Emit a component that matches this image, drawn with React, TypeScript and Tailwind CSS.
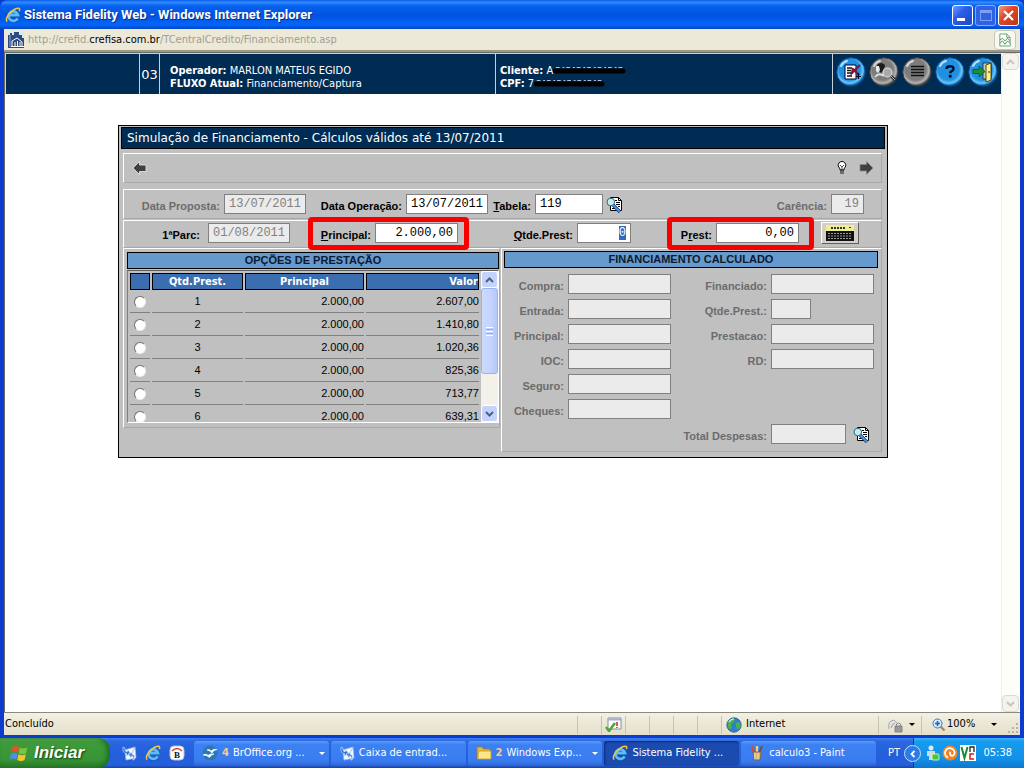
import React from "react";

const TAHOMA = "font-['DejaVu_Sans_Condensed','Noto_Sans',sans-serif]";

type IconProps = { className?: string };

function IeIcon({ className = "h-4 w-4" }: IconProps) {
  return (
    <svg viewBox="0 0 16 16" className={className} aria-hidden="true">
      <path d="M12.600 11.300A4.800 4.800 0 1 1 13 8H5" fill="none" stroke="#0d4fa8" strokeWidth="4" />
      <path d="M12.600 11.300A4.800 4.800 0 1 1 13 8H5" fill="none" stroke="#5cbcf8" strokeWidth="2.800" />
      <path d="M2.200 14.600C-1 11.500 7 2 13 1.200c2-.2 2 1.600 1.200 3" fill="none" stroke="#f4c542" strokeWidth="1.500" />
    </svg>
  );
}

function SiteIcon({ className = "h-4 w-4" }: IconProps) {
  return (
    <svg viewBox="0 0 16 16" className={className} aria-hidden="true">
      <path d="M0 0h16v16H0z" fill="#dfe6f0" />
      <path d="M0 16V3h2V1h2v2h2V0h5v3h3v3h2v10z" fill="#2b4a80" />
      <path d="M2 3v12" stroke="#8fa6cc" strokeWidth="1" />
      <path d="M4 14V9l5-3 5 4v4M7 14v-4M9.500 14V9M12 14v-4M3 14.500h13" fill="none" stroke="#fff" strokeWidth="1" />
    </svg>
  );
}

function BrokenPageIcon() {
  return (
    <svg viewBox="0 0 14 16" className="h-3.5 w-3" aria-hidden="true">
      <path d="M1 1h8l4 4v10H1z" fill="#fff" stroke="#5b9a62" />
      <path d="M9 1v4h4" fill="none" stroke="#5b9a62" />
      <path d="M1 8l3-2 3 3 3-3 3 3M1 12l3-3 3 4 3-4 3 3" fill="none" stroke="#3b8746" />
    </svg>
  );
}

type OrbProps = { id: string; tone: "blue" | "gray"; label: string; children: React.ReactNode };

function Orb({ id, tone, label, children }: OrbProps) {
  const [light, mid, dark] = tone === "blue" ? ["#6cc6fa", "#2090e0", "#064f94"] : ["#b4b4b4", "#7c7c7c", "#3c3c3c"];
  return (
    <button type="button" aria-label={label} className="h-[30px] w-[30px]">
      <svg viewBox="0 0 30 30" className="h-[30px] w-[30px]">
        <defs>
          <radialGradient id={id} cx="0.45" cy="0.42" r="0.56">
            <stop offset="0" stopColor={mid} />
            <stop offset="0.65" stopColor={mid} />
            <stop offset="0.85" stopColor={light} />
            <stop offset="1" stopColor={dark} />
          </radialGradient>
        </defs>
        <circle cx="15" cy="15" r="14.200" fill={`url(#${id})`} stroke={dark} />
        <path d="M5 9q2-4 6-5" fill="none" stroke="#fff" strokeOpacity=".7" strokeWidth="2" strokeLinecap="round" />
        {children}
      </svg>
    </button>
  );
}

function ToolbarOrbs() {
  return (
    <div className="flex gap-[3px]">
      <Orb id="orb-proposal" tone="blue" label="Proposta">
        <path d="M9 8h11v14H9z" fill="#fff" stroke="#003" strokeWidth="1" />
        <path d="M11 11h5M11 13.500h4M11 16h6M11 19h5" stroke="#111" strokeWidth="1.300" />
        <path d="M24 8l-8 8 1-5M17 12l6 6" stroke="#8a1230" strokeWidth="2.200" fill="none" />
        <path d="M22.500 16v6M20 19.500h5" stroke="#112" strokeWidth="1.200" />
      </Orb>
      <Orb id="orb-customer" tone="gray" label="Pesquisar cliente">
        <path d="M8 8q4-4 8 0l-1 5-3 3-3-3z" fill="#1c1c1c" />
        <path d="M7 9h3l1 4-2 3-2-2z" fill="#e8e8e8" />
        <path d="M6 20q4-5 9-1" stroke="#ddd" strokeWidth="2" fill="none" />
        <circle cx="18.500" cy="15.500" r="4.500" fill="#a9a9a9" stroke="#e0e0e0" strokeWidth="1.200" />
        <path d="M22 19l4 4" stroke="#222" strokeWidth="2.500" />
        <path d="M22 19l4 4" stroke="#bbb" strokeWidth="1" />
      </Orb>
      <Orb id="orb-list" tone="gray" label="Lista">
        <path d="M9 9.500h13M9 12.500h13M9 15.500h13M9 18.500h13" stroke="#111" strokeWidth="1.300" />
      </Orb>
      <Orb id="orb-help" tone="blue" label="Ajuda">
        <path d="M11.500 12q0-2.800 3.500-2.800t3.500 2.600q0 1.500-1.800 2.300-1.500.7-1.500 2.200" fill="none" stroke="#06122a" strokeWidth="2.500" />
        <path d="M13.800 17.800h2.800v2.800h-2.800z" fill="#06122a" />
      </Orb>
      <Orb id="orb-exit" tone="blue" label="Sair">
        <path d="M15 6h8v16h-8z" fill="#c9c6a8" stroke="#222" strokeWidth=".8" />
        <path d="M18 8l5-2v17l-5 2z" fill="#fff37a" stroke="#222" strokeWidth=".8" />
        <path d="M21 14v2" stroke="#222" />
        <path d="M5 12.500h6V9l6 5.500-6 5.500v-3.500H5z" fill="#1f8f2f" stroke="#053" strokeWidth=".8" />
      </Orb>
    </div>
  );
}

function ArrowIcon({ flip = false }: { flip?: boolean }) {
  return (
    <svg viewBox="0 0 15 14" className={flip ? "h-3.5 w-[15px] rotate-180" : "h-3.5 w-[15px]"} aria-hidden="true">
      <path d="M1 7l6.500-6.500V4H14v6.500H7.500V13.500z" fill="#404040" stroke={flip ? "#8a8a8a" : "#eee"} strokeWidth=".8" />
    </svg>
  );
}

function BulbIcon() {
  return (
    <svg viewBox="0 0 10 14" className="h-3.5 w-2.5" aria-hidden="true">
      <path d="M3 9V7.500A3.800 3.800 0 1 1 7 7.500V9z" fill="#fff" stroke="#000" />
      <path d="M3 4l2 2 2-2M5 6v3" fill="none" stroke="#000" strokeWidth=".7" />
      <path d="M3 9.500h4v3H3z" fill="#222" />
      <path d="M3 11h4" stroke="#ddd" strokeWidth=".8" />
    </svg>
  );
}

function SearchDocIcon() {
  return (
    <svg viewBox="0 0 17 17" className="h-[17px] w-[17px]" aria-hidden="true">
      <path d="M4.500 1.500h8l3 3v10h-11z" fill="#fff" stroke="#000" />
      <path d="M12.500 1.500v3h3" fill="none" stroke="#000" />
      <path d="M9 4.500h2M10 6.500h4M10 8.500h4M12 10.500h2M6 12.500h3" stroke="#000" />
      <circle cx="4.800" cy="6" r="3.800" fill="#c4ecec" stroke="#2b6d78" />
      <path d="M7 9l7 7" stroke="#0b2f70" strokeWidth="3.200" />
      <path d="M7 9l7 7" stroke="#4f97e8" strokeWidth="1.800" />
    </svg>
  );
}

function CalculatorIcon() {
  return (
    <svg viewBox="0 0 28 16" className="h-4 w-7" aria-hidden="true">
      <path d="M0 0h28v16H0z" fill="#111" />
      <path d="M0 0h28v6H0z" fill="#f1ee8c" />
      <path d="M5 3h14" stroke="#333" strokeWidth="2" strokeDasharray="2 1" />
      <path d="M23 2.500h2" stroke="#333" />
      <path d="M2 8.500h24M2 11h24M2 13.500h24" stroke="#999" strokeWidth="1" strokeDasharray="2 1" />
    </svg>
  );
}

function Chevron({ up = false, color }: { up?: boolean; color: string }) {
  return (
    <svg viewBox="0 0 9 6" className="h-1.5 w-[9px]" aria-hidden="true">
      <path d={up ? "M1 5l3.500-3.500L8 5" : "M1 1l3.500 3.500L8 1"} fill="none" stroke={color} strokeWidth="2" />
    </svg>
  );
}

function OutlookIcon() {
  return (
    <svg viewBox="0 0 16 16" className="h-4 w-4 shrink-0" aria-hidden="true">
      <path d="M4 5l10-3 1 11-10 2z" fill="#f6faff" stroke="#9fc0ea" strokeWidth=".7" />
      <path d="M4 5l6 5 4-8" fill="none" stroke="#8fb3e0" strokeWidth=".8" />
      <path d="M2 2q-1 6 4 7l-1 2 5-2-3-4-1 2Q3 6 4 3z" fill="#2f74cc" stroke="#d6e8ff" strokeWidth=".6" />
      <path d="M13 15q2-5-2-6l1-2-5 2 3 4 1-2q2 1 1 4z" fill="#4a90e0" stroke="#e6f2ff" strokeWidth=".6" />
    </svg>
  );
}

function BrOfficeIcon() {
  return (
    <svg viewBox="0 0 16 16" className="h-4 w-4 shrink-0" aria-hidden="true">
      <circle cx="8" cy="8" r="7.500" fill="#2c78b4" />
      <path d="M5 5q2.500-1.500 4 1 2-2.500 6-1.500-3.500.5-5 3.500Q8 5.500 5 5zM1 10q3-2 5 .5Q8.500 8 12 9q-3 .5-4.500 3.500Q5 10 1 10z" fill="#fff" stroke="#fff" strokeWidth=".6" />
    </svg>
  );
}

function BIcon() {
  return (
    <svg viewBox="0 0 16 16" className="h-4 w-4" aria-hidden="true">
      <rect x="1" y="1" width="14" height="14" rx="4" fill="#fff" stroke="#b8c4d8" />
      <path d="M3 6q5-5 10 0" fill="none" stroke="#d0402c" strokeWidth="1.300" />
      <text x="8" y="13" textAnchor="middle" fontSize="9" fontWeight="bold" fontFamily="Liberation Serif" fill="#111">
        B
      </text>
    </svg>
  );
}

function FolderIcon() {
  return (
    <svg viewBox="0 0 16 16" className="h-4 w-4 shrink-0" aria-hidden="true">
      <path d="M1 14V2h5l1.500 2H14v10z" fill="#e9b93a" stroke="#a87814" strokeWidth=".8" />
      <path d="M2.500 6H15v8H2z" fill="#fce58a" stroke="#c69a2c" strokeWidth=".8" />
    </svg>
  );
}

function PaintIcon() {
  return (
    <svg viewBox="0 0 16 16" className="h-4 w-4 shrink-0" aria-hidden="true">
      <path d="M5 8L3 1" stroke="#d84a2c" strokeWidth="2.200" />
      <path d="M8 8V1" stroke="#f1d27a" strokeWidth="2.200" />
      <path d="M10 8l3-7" stroke="#7a4a20" strokeWidth="1.800" />
      <path d="M4 7h8l-1 8H5z" fill="#d4b27a" stroke="#7a5a34" strokeWidth=".8" />
      <path d="M6 8v6M9 8v6" stroke="#efe0c0" strokeWidth="1" />
    </svg>
  );
}

function GlobeIcon() {
  return (
    <svg viewBox="0 0 16 16" className="h-4 w-4" aria-hidden="true">
      <circle cx="8" cy="8" r="7.200" fill="#2e7fd0" stroke="#1c5694" strokeWidth=".8" />
      <path d="M3 3q4-3 6-1L8 5 5 7l1 3-2 3Q0 9 3 3zM10 6l4-1q2 5-2 8l-2-3z" fill="#4fb04a" />
      <path d="M3 5q2-3 5-3" stroke="#cfe8ff" strokeWidth="1.200" fill="none" />
    </svg>
  );
}

function WindowsFlag() {
  return (
    <svg viewBox="0 0 18 18" className="h-[18px] w-[18px]" aria-hidden="true">
      <path d="M2.500 3.500Q5.500 1 9 3L7.800 8.500Q4.500 6.500 1.300 9z" fill="#e8512c" />
      <path d="M9.800 3.500q3.500 2 7.500 0L16 9.300q-3.500 2-7.300 0z" fill="#7fc241" />
      <path d="M1 10q3-2.200 6.500-.2l-1.200 5.500Q3 13.500-.2 15.500z" fill="#4a8ff0" />
      <path d="M8.500 10.200q3.500 2 7.300 0l-1.300 5.800q-3.500 2-7.200 0z" fill="#fbc42e" />
    </svg>
  );
}

function TitleBar() {
  return (
    <header className="flex h-[29px] items-center gap-[3px] rounded-t-lg bg-[linear-gradient(#0a5ce8,#2f8bff_8%,#0761ee_20%,#0053e1_55%,#0566fb_85%,#0148c4)] pt-px pr-[5px] pl-[5px]">
      <IeIcon className="h-4 w-4" />
      <h1 className="font-['Roboto','Noto_Sans',sans-serif] text-[13px] font-bold text-white [text-shadow:1px_1px_#0a2a80]">
        Sistema Fidelity Web - Windows Internet Explorer
      </h1>
      <div className="ml-auto flex gap-0.5">
        <button
          type="button"
          aria-label="Minimizar"
          className="flex h-[21px] w-[21px] items-end rounded-[3px] border border-white bg-[linear-gradient(135deg,#6f9bff,#2a5de8_40%,#1c48c8)] p-1"
        >
          <span className="h-[3px] w-2 bg-white" />
        </button>
        <button
          type="button"
          aria-label="Maximizar"
          disabled
          className="flex h-[21px] w-[21px] items-center justify-center rounded-[3px] border border-[#8aa9f5] bg-[#2f62e4]"
        >
          <span className="h-[11px] w-3 border border-t-[3px] border-[#7f9ff2]" />
        </button>
        <button
          type="button"
          aria-label="Fechar"
          className="flex h-[21px] w-[21px] items-center justify-center rounded-[3px] border border-white bg-[linear-gradient(135deg,#f0a088,#e0482a_40%,#c23412)]"
        >
          <svg viewBox="0 0 11 11" className="h-[11px] w-[11px]">
            <path d="M1 1l9 9M10 1l-9 9" stroke="#fff" strokeWidth="2.200" />
          </svg>
        </button>
      </div>
    </header>
  );
}

function AddressBar() {
  return (
    <div className="flex h-[23px] items-center border-b-2 border-[#9a998c] bg-[#ece9d8] pl-1">
      <SiteIcon />
      <span className={`ml-1 pt-0.5 text-[11px] text-[#a09e92] ${TAHOMA}`}>
        http://crefid.<span className="text-black">crefisa.com.br</span>/TCentralCredito/Financiamento.asp
      </span>
      <button
        type="button"
        aria-label="Exibir modo de compatibilidade"
        className="mr-1 ml-auto flex h-5 w-[22px] items-center justify-center rounded-sm border border-[#c9c7ba] bg-[#f8f7f2]"
      >
        <BrokenPageIcon />
      </button>
    </div>
  );
}

function Redaction({ first, className }: { first: string; className: string }) {
  return (
    <span className="inline-flex items-center">
      {first}
      <svg viewBox="0 0 78 9" preserveAspectRatio="none" className={className} aria-hidden="true">
        <path d="M3 1.500h71" stroke="#b9c6d6" strokeWidth="1" strokeDasharray="4 3 2 2" />
        <path d="M2 5h72" fill="none" stroke="#000" strokeWidth="5" strokeLinecap="round" />
      </svg>
    </span>
  );
}

function AppHeader() {
  return (
    <div className={`flex h-[41px] border-t border-l border-[#c8d0d8] bg-[#002c54] text-[11px] leading-[13px] text-white ${TAHOMA}`}>
      <div className="w-[133px]" />
      <div className="flex w-5 items-center justify-center border-l border-[#c8d0d8] font-['DejaVu_Sans',sans-serif] text-[13px]">
        03
      </div>
      <div className="w-[336px] border-l border-[#c8d0d8] pt-2.5 pl-2.5">
        <p>
          <b>Operador:</b> MARLON MATEUS EGIDO
        </p>
        <p>
          <b>FLUXO Atual:</b> Financiamento/Captura
        </p>
      </div>
      <div className="flex-1 border-l border-[#c8d0d8] pt-2.5 pl-1">
        <p>
          <b>Cliente:</b> <Redaction first="A" className="h-[9px] w-[74px]" />
        </p>
        <p>
          <b>CPF:</b> <Redaction first="7" className="h-[9px] w-[72px]" />
        </p>
      </div>
      <div className="border-l border-[#c8d0d8] pt-[3px] pr-[3px] pl-[3px]">
        <ToolbarOrbs />
      </div>
    </div>
  );
}

type FieldProps = {
  id: string;
  label: React.ReactNode;
  value?: string;
  disabled?: boolean;
  readOnly?: boolean;
  labelClass: string;
  inputClass: string;
  selected?: boolean;
};

function Field({ id, label, value = "", disabled = false, readOnly = false, labelClass, inputClass, selected = false }: FieldProps) {
  const dimmed = disabled || readOnly;
  return (
    <>
      <label
        htmlFor={id}
        className={`h-5 shrink-0 pt-1 text-right leading-4 font-bold whitespace-nowrap ${disabled ? "text-[#6c6c6c]" : "text-black"} ${labelClass}`}
      >
        {label}
      </label>
      <input
        id={id}
        type="text"
        defaultValue={value}
        disabled={disabled}
        readOnly={readOnly}
        autoFocus={selected}
        onFocus={selected ? (e) => e.target.select() : undefined}
        className={`h-5 shrink-0 border border-[#808080] px-1 font-['Liberation_Mono',monospace] text-[12px] caret-transparent outline-none selection:bg-[#316ac5] selection:text-white ${
          dimmed ? "bg-[#ebebeb] text-[#808080]" : "bg-white text-black"
        } ${inputClass}`}
      />
    </>
  );
}

// groups a field with a thick red marker drawn over the form row
function Highlighted({ className, children }: { className: string; children: React.ReactNode }) {
  return (
    <div className={`relative flex items-center ${className}`}>
      {children}
      <span className="pointer-events-none absolute inset-x-0 -top-1.5 -bottom-[7px] rounded-sm border-[5px] border-[#f80000]" />
    </div>
  );
}

const GROOVE = "border border-t-white border-l-white border-r-[#a8a8a8] border-b-[#a8a8a8]";

const installments = [
  { qty: 1, principal: "2.000,00", value: "2.607,00" },
  { qty: 2, principal: "2.000,00", value: "1.410,80" },
  { qty: 3, principal: "2.000,00", value: "1.020,36" },
  { qty: 4, principal: "2.000,00", value: "825,36" },
  { qty: 5, principal: "2.000,00", value: "713,77" },
  { qty: 6, principal: "2.000,00", value: "639,31" },
];

function ListScrollbar() {
  return (
    <div className="flex w-[17px] shrink-0 flex-col bg-[#f3f1ea]">
      <button type="button" aria-label="Rolar para cima" className="flex h-[17px] items-center justify-center rounded-[3px] border border-white bg-[#c3d3fd]">
        <Chevron up color="#4d6185" />
      </button>
      <div className="flex h-[86px] flex-col items-center justify-center gap-px rounded-[3px] border border-[#98b4f0] bg-[linear-gradient(90deg,#cbdafe,#c3d3fd_60%,#b4c8f8)]">
        <span className="h-px w-[7px] bg-white" />
        <span className="h-px w-[7px] bg-[#8cb0f8]" />
        <span className="h-px w-[7px] bg-white" />
        <span className="h-px w-[7px] bg-[#8cb0f8]" />
        <span className="h-px w-[7px] bg-white" />
      </div>
      <button type="button" aria-label="Rolar para baixo" className="mt-auto flex h-[17px] items-center justify-center rounded-[3px] border border-white bg-[#c3d3fd]">
        <Chevron color="#4d6185" />
      </button>
    </div>
  );
}

function SectionTitle({ children }: { children: React.ReactNode }) {
  return (
    <h3 className="h-[17px] border border-black bg-[#6699cc] text-center text-[11px] leading-[15px] font-bold text-[#0c1a30]">
      {children}
    </h3>
  );
}

function InstallmentOptions() {
  const th = "h-[17px] border border-black bg-[#3a6eb0] p-0 leading-[15px]";
  const td = "h-[21px] border-b border-[#808080] p-0 pb-px";
  return (
    <section className={`${GROOVE} w-[377px] shrink-0 self-start pt-[3px] pb-1 pl-[3px]`}>
      <SectionTitle>OPÇÕES DE PRESTAÇÃO</SectionTitle>
      <div className="mt-px flex h-[153px] overflow-hidden border border-t-[#606060] border-r-white border-b-white border-l-[#808080]">
        <div className="h-full flex-1 overflow-hidden">
          <table className="w-full table-fixed border-separate border-spacing-[2px] text-[11px]">
            <thead className={`text-white ${TAHOMA}`}>
              <tr>
                <th className={`${th} w-5`} aria-label="Selecionar" />
                <th className={`${th} w-[91px]`}>Qtd.Prest.</th>
                <th className={`${th} w-[119px]`}>Principal</th>
                <th className={`${th} text-right`}>Valor</th>
              </tr>
            </thead>
            <tbody>
              {installments.map((row) => (
                <tr key={row.qty}>
                  <td className={td}>
                    <input
                      type="radio"
                      name="prestacao"
                      aria-label={`${row.qty} prestações`}
                      className="mx-auto block h-3 w-3 appearance-none rounded-full border border-t-[#707070] border-r-[#eee] border-b-[#eee] border-l-[#707070] bg-white"
                    />
                  </td>
                  <td className={`${td} text-center`}>{row.qty}</td>
                  <td className={`${td} text-right`}>{row.principal}</td>
                  <td className={`${td} text-right`}>{row.value}</td>
                </tr>
              ))}
            </tbody>
          </table>
        </div>
        <ListScrollbar />
      </div>
    </section>
  );
}

function CalculatedFinancing() {
  return (
    <section className={`${GROOVE} flex-1 pt-[2px] pb-[7px]`}>
      <div className="pr-[3px] pl-[2px]">
        <SectionTitle>FINANCIAMENTO CALCULADO</SectionTitle>
      </div>
      <div className="mt-1.5 grid grid-cols-[62px_103px_92px_103px] gap-x-1 gap-y-[5px]">
        <Field id="compra" label="Compra:" disabled labelClass="" inputClass="w-full" />
        <Field id="financiado" label="Financiado:" disabled labelClass="" inputClass="w-full" />
        <Field id="entrada" label="Entrada:" disabled labelClass="" inputClass="w-full" />
        <Field id="qtde-calc" label="Qtde.Prest.:" disabled labelClass="" inputClass="w-10" />
        <Field id="principal-calc" label="Principal:" disabled labelClass="" inputClass="w-full" />
        <Field id="prestacao-calc" label="Prestacao:" disabled labelClass="" inputClass="w-full" />
        <Field id="ioc" label="IOC:" disabled labelClass="" inputClass="w-full" />
        <Field id="rd" label="RD:" disabled labelClass="" inputClass="w-full" />
        <Field id="seguro" label="Seguro:" disabled labelClass="col-start-1" inputClass="w-full" />
        <Field id="cheques" label="Cheques:" disabled labelClass="col-start-1" inputClass="w-full" />
        <label htmlFor="total" className="col-span-3 h-5 pt-1 text-right leading-4 font-bold text-[#6c6c6c]">
          Total Despesas:
        </label>
        <div className="flex h-5 items-center justify-between">
          <input id="total" type="text" disabled className="h-5 w-[75px] border border-[#808080] bg-[#ebebeb]" />
          <button type="button" aria-label="Detalhar despesas" className="mr-1">
            <SearchDocIcon />
          </button>
        </div>
      </div>
    </section>
  );
}

function SimulationPanel() {
  return (
    <main className="mx-auto mt-[31px] w-[770px] border border-black bg-[#c0c0c0] px-[2px] pt-px pb-[5px] font-['Liberation_Sans',Arial,sans-serif] text-[11px]">
      <h2 className="h-[22px] border border-black bg-[#002c54] pl-[5px] font-['DejaVu_Sans',sans-serif] text-[12px] leading-5 text-white">
        Simulação de Financiamento - Cálculos válidos até 13/07/2011
      </h2>
      <div className="mr-[3px] ml-[2px]">
        <div className={`${GROOVE} mt-1 flex h-[30px] items-center pr-[7px] pl-2`}>
          <button type="button" aria-label="Voltar">
            <ArrowIcon />
          </button>
          <button type="button" aria-label="Dica" className="mr-3 ml-auto">
            <BulbIcon />
          </button>
          <button type="button" aria-label="Avançar">
            <ArrowIcon flip />
          </button>
        </div>

        <div className={`${GROOVE} mt-1.5 flex items-center py-1 pr-[17px]`}>
          <Field id="data-proposta" label="Data Proposta:" value="13/07/2011" disabled labelClass="mr-1 w-24" inputClass="w-[82px]" />
          <Field id="data-operacao" label="Data Operação:" value="13/07/2011" labelClass="mr-1 w-24" inputClass="w-[82px]" />
          <Field
            id="tabela"
            label={
              <>
                <u>T</u>abela:
              </>
            }
            value="119"
            labelClass="mr-1 w-[43px]"
            inputClass="w-[68px]"
          />
          <button type="button" aria-label="Pesquisar tabela" className="mr-auto ml-[3px]">
            <SearchDocIcon />
          </button>
          <Field id="carencia" label="Carência:" value="19" disabled labelClass="mr-1" inputClass="w-[33px] text-right" />
        </div>

        <div className={`${GROOVE} mt-px flex items-center pt-[2px] pb-1`}>
          <Field id="parcela" label="1ªParc:" value="01/08/2011" readOnly labelClass="mr-2 w-[76px]" inputClass="w-[82px]" />
          <Highlighted className="ml-[18px] w-[161px]">
            <Field
              id="principal"
              label={
                <>
                  <u>P</u>rincipal:
                </>
              }
              value="2.000,00"
              labelClass="mr-1 w-[63px]"
              inputClass="w-[83px] text-right"
            />
          </Highlighted>
          <Field
            id="qtde-prest"
            label={
              <>
                <u>Q</u>tde.Prest:
              </>
            }
            value="0"
            selected
            labelClass="mr-1 w-[104px]"
            inputClass="w-[54px] text-right"
          />
          <Highlighted className="ml-9 w-[147px]">
            <Field
              id="prest"
              label={
                <>
                  P<u>r</u>est:
                </>
              }
              value="0,00"
              labelClass="mr-1 w-[45px]"
              inputClass="w-[83px] text-right"
            />
          </Highlighted>
          <button
            type="button"
            aria-label="Calcular"
            className="-my-px ml-[7px] flex h-[22px] w-[38px] items-center justify-center border border-t-white border-r-[#606060] border-b-[#606060] border-l-white bg-[#d4d0c8]"
          >
            <CalculatorIcon />
          </button>
        </div>

        <div className="flex gap-px">
          <InstallmentOptions />
          <CalculatedFinancing />
        </div>
      </div>
    </main>
  );
}

function PageScrollbar() {
  const btn = "flex h-[17px] items-center justify-center rounded-sm border border-[#dcdad0] bg-[#f4f3ee]";
  return (
    <div className="flex w-[19px] shrink-0 flex-col justify-between border-l border-[#f0efe6] bg-[#fdfdfa] pr-px">
      <button type="button" aria-label="Subir página" disabled className={btn}>
        <Chevron up color="#c9c7ba" />
      </button>
      <button type="button" aria-label="Descer página" disabled className={btn}>
        <Chevron color="#c9c7ba" />
      </button>
    </div>
  );
}

function StatusBar() {
  const cell = "h-[18px] border-l border-[#c5c2b2]";
  return (
    <footer className={`flex h-[23px] items-center border-t border-[#8a897c] bg-[linear-gradient(#f3f1e6,#ece9d8_40%,#e4e0cc)] pt-px text-[11px] text-black ${TAHOMA}`}>
      <span className="flex-1 pl-px">Concluído</span>
      <span className={`${cell} w-6`} />
      <span className={`${cell} flex w-6 items-center justify-center`}>
        <svg viewBox="0 0 17 15" className="h-[15px] w-[17px]" aria-hidden="true">
          <path d="M3 1h13v11H3z" fill="#fff" stroke="#8d8d8d" />
          <path d="M3 2.500h13" stroke="#9bb3d6" strokeWidth="2" />
          <path d="M12 5v4M12 10v1" stroke="#d83020" strokeWidth="1.600" />
          <path d="M1 10l3 4 6-8" fill="none" stroke="#53a43c" strokeWidth="2.600" />
        </svg>
      </span>
      <span className={`${cell} w-6`} />
      <span className={`${cell} w-6`} />
      <span className={`${cell} w-6`} />
      <span className={`${cell} w-6`} />
      <span className={`${cell} flex w-[157px] items-center gap-1 pl-1`}>
        <GlobeIcon />
        Internet
      </span>
      <button type="button" aria-label="Modo protegido" className={`${cell} flex w-[43px] items-center gap-1.5 pl-2`}>
        <svg viewBox="0 0 16 16" className="h-4 w-4" aria-hidden="true">
          <path d="M2 12q-2-8 5-9l3 3" fill="#e2e2e2" stroke="#a8a8a8" />
          <path d="M4 11q1-4 4-5" stroke="#999" fill="none" />
          <path d="M8 9h7v6H8z" fill="#9a9a9a" stroke="#777" strokeWidth=".8" />
          <path d="M9.500 9V7q2-2 4 0v2" fill="none" stroke="#888" />
        </svg>
        <span className="border-x-[3px] border-t-[3px] border-x-transparent border-t-black" />
      </button>
      <button type="button" className={`${cell} flex w-[99px] items-center pl-2.5`}>
        <svg viewBox="0 0 14 14" className="h-3.5 w-3.5" aria-hidden="true">
          <path d="M8.500 8.500l4 4" stroke="#b98a4a" strokeWidth="2.400" />
          <circle cx="5.500" cy="5.500" r="4.500" fill="#d8ebfb" stroke="#3f78b8" />
          <path d="M3 5.500h5M5.500 3v5" stroke="#2b5fb4" strokeWidth="1.600" />
        </svg>
        <span className="ml-px">100%</span>
        <span className="ml-4 border-x-[3px] border-t-[3px] border-x-transparent border-t-black" />
        <svg viewBox="0 0 12 12" className="mt-1.5 mr-px ml-auto h-3 w-3" aria-hidden="true">
          <path d="M9 1h2v2H9zM5 5h2v2H5zM9 5h2v2H9zM1 9h2v2H1zM5 9h2v2H5zM9 9h2v2H9z" fill="#b8b4a2" />
        </svg>
      </button>
    </footer>
  );
}

type TaskProps = {
  icon: React.ReactNode;
  label: string;
  count?: number;
  active?: boolean;
  menu?: boolean;
};

function TaskButton({ icon, label, count, active = false, menu = false }: TaskProps) {
  return (
    <button
      type="button"
      className={`flex h-[25px] min-w-0 flex-1 items-center gap-1 rounded-[3px] pr-1 pl-2 text-left text-white ${
        active
          ? "bg-[#1c4bb0] shadow-[inset_1px_1px_2px_#0c2c78]"
          : "bg-[linear-gradient(#5a9bf8,#3c81f3_15%,#3a7cf0_80%,#2c64d4)]"
      }`}
    >
      {icon}
      {count !== undefined && <b className="text-[#f8c890]">{count}</b>}
      <span className="flex-1 whitespace-nowrap">{label}</span>
      {menu && <span className="border-x-[3px] border-t-[3px] border-x-transparent border-t-white" />}
    </button>
  );
}

function Taskbar() {
  return (
    <nav className={`flex h-[30px] shrink-0 items-center bg-[linear-gradient(#3a80ee,#2b66e0_12%,#245edb_60%,#2560dc_90%,#1941a5)] text-[11px] ${TAHOMA}`}>
      <button
        type="button"
        className="flex h-full w-[110px] shrink-0 items-center gap-1 rounded-r-xl bg-[linear-gradient(#5fb25c,#3f9a3c_15%,#389636_70%,#2a7a2a)] pl-2.5 shadow-[inset_-3px_0_5px_#1f6a22]"
      >
        <WindowsFlag />
        <span className="ml-0.5 font-['Liberation_Sans',sans-serif] text-[17px] font-bold text-white italic [text-shadow:1px_1px_2px_#123f12]">
          Iniciar
        </span>
      </button>
      <div className="flex w-[84px] shrink-0 items-center gap-2 pl-[11px]">
        <OutlookIcon />
        <IeIcon />
        <BIcon />
      </div>
      <div className="flex min-w-0 flex-1 gap-0.5">
        <TaskButton icon={<BrOfficeIcon />} count={4} label="BrOffice.org ..." menu />
        <TaskButton icon={<OutlookIcon />} label="Caixa de entrad..." />
        <TaskButton icon={<FolderIcon />} count={2} label="Windows Exp..." menu />
        <TaskButton icon={<IeIcon className="h-4 w-4 shrink-0" />} label="Sistema Fidelity ..." active />
        <TaskButton icon={<PaintIcon />} label="calculo3 - Paint" />
      </div>
      <span className="w-[37px] shrink-0 pl-3 text-white">PT</span>
      <div className="relative flex h-full w-[111px] shrink-0 items-center gap-0.5 border-l border-[#0a3c9c] bg-[linear-gradient(#3cb4f8,#169bef_12%,#1290e8_70%,#0c78d0)] pl-2.5 text-white">
        <button
          type="button"
          aria-label="Mostrar ícones ocultos"
          className="absolute top-[7px] -left-2.5 flex h-[17px] w-[17px] items-center justify-center rounded-full border border-[#bfe0ff] bg-[#2a7be8]"
        >
          <svg viewBox="0 0 8 8" className="h-2 w-2">
            <path d="M5.500 1l-3 3 3 3" fill="none" stroke="#fff" strokeWidth="1.800" />
          </svg>
        </button>
        <svg viewBox="0 0 16 16" className="h-4 w-4" aria-hidden="true">
          <circle cx="7" cy="3" r="2.500" fill="#dfe9f2" />
          <path d="M3 6h8v5H9v4H5v-4H3z" fill="#cfdce8" />
          <rect x="8" y="9" width="7" height="6" rx="1" fill="#4fc43a" stroke="#e4ffd8" strokeWidth=".8" />
        </svg>
        <svg viewBox="0 0 16 16" className="h-4 w-4" aria-hidden="true">
          <circle cx="8" cy="8" r="7.500" fill="#f08420" />
          <path d="M6 12.500A4.800 4.800 0 1 1 12.500 9" fill="none" stroke="#fff" strokeWidth="1.800" />
          <path d="M12.500 9q-2 3-4 1-1-2 0-3" fill="none" stroke="#fff" strokeWidth="1.800" />
        </svg>
        <svg viewBox="0 0 16 16" className="h-4 w-4" aria-hidden="true">
          <path d="M0 0h16v16H0z" fill="#fff" />
          <path d="M1.500 2l3 11 3-11" fill="none" stroke="#1c8a30" strokeWidth="2" />
          <path d="M10 7V2h4v5" fill="none" stroke="#222" strokeWidth="1.300" />
          <path d="M14 9h-4v5h4" fill="none" stroke="#d02020" strokeWidth="1.500" />
        </svg>
        <time className="mr-3 ml-auto">05:38</time>
      </div>
    </nav>
  );
}

export default function App() {
  return (
    <div className="flex min-h-screen flex-col bg-[#0b3bd0]">
      <div className="flex flex-1 flex-col">
        <TitleBar />
        <div className="mx-1 mb-[3px] flex flex-1 flex-col bg-white">
          <AddressBar />
          <div className="flex flex-1 border-t border-l border-[#6c6b60]">
            <div className="min-w-0 flex-1 pb-6">
              <AppHeader />
              <SimulationPanel />
            </div>
            <PageScrollbar />
          </div>
          <StatusBar />
        </div>
      </div>
      <Taskbar />
    </div>
  );
}
